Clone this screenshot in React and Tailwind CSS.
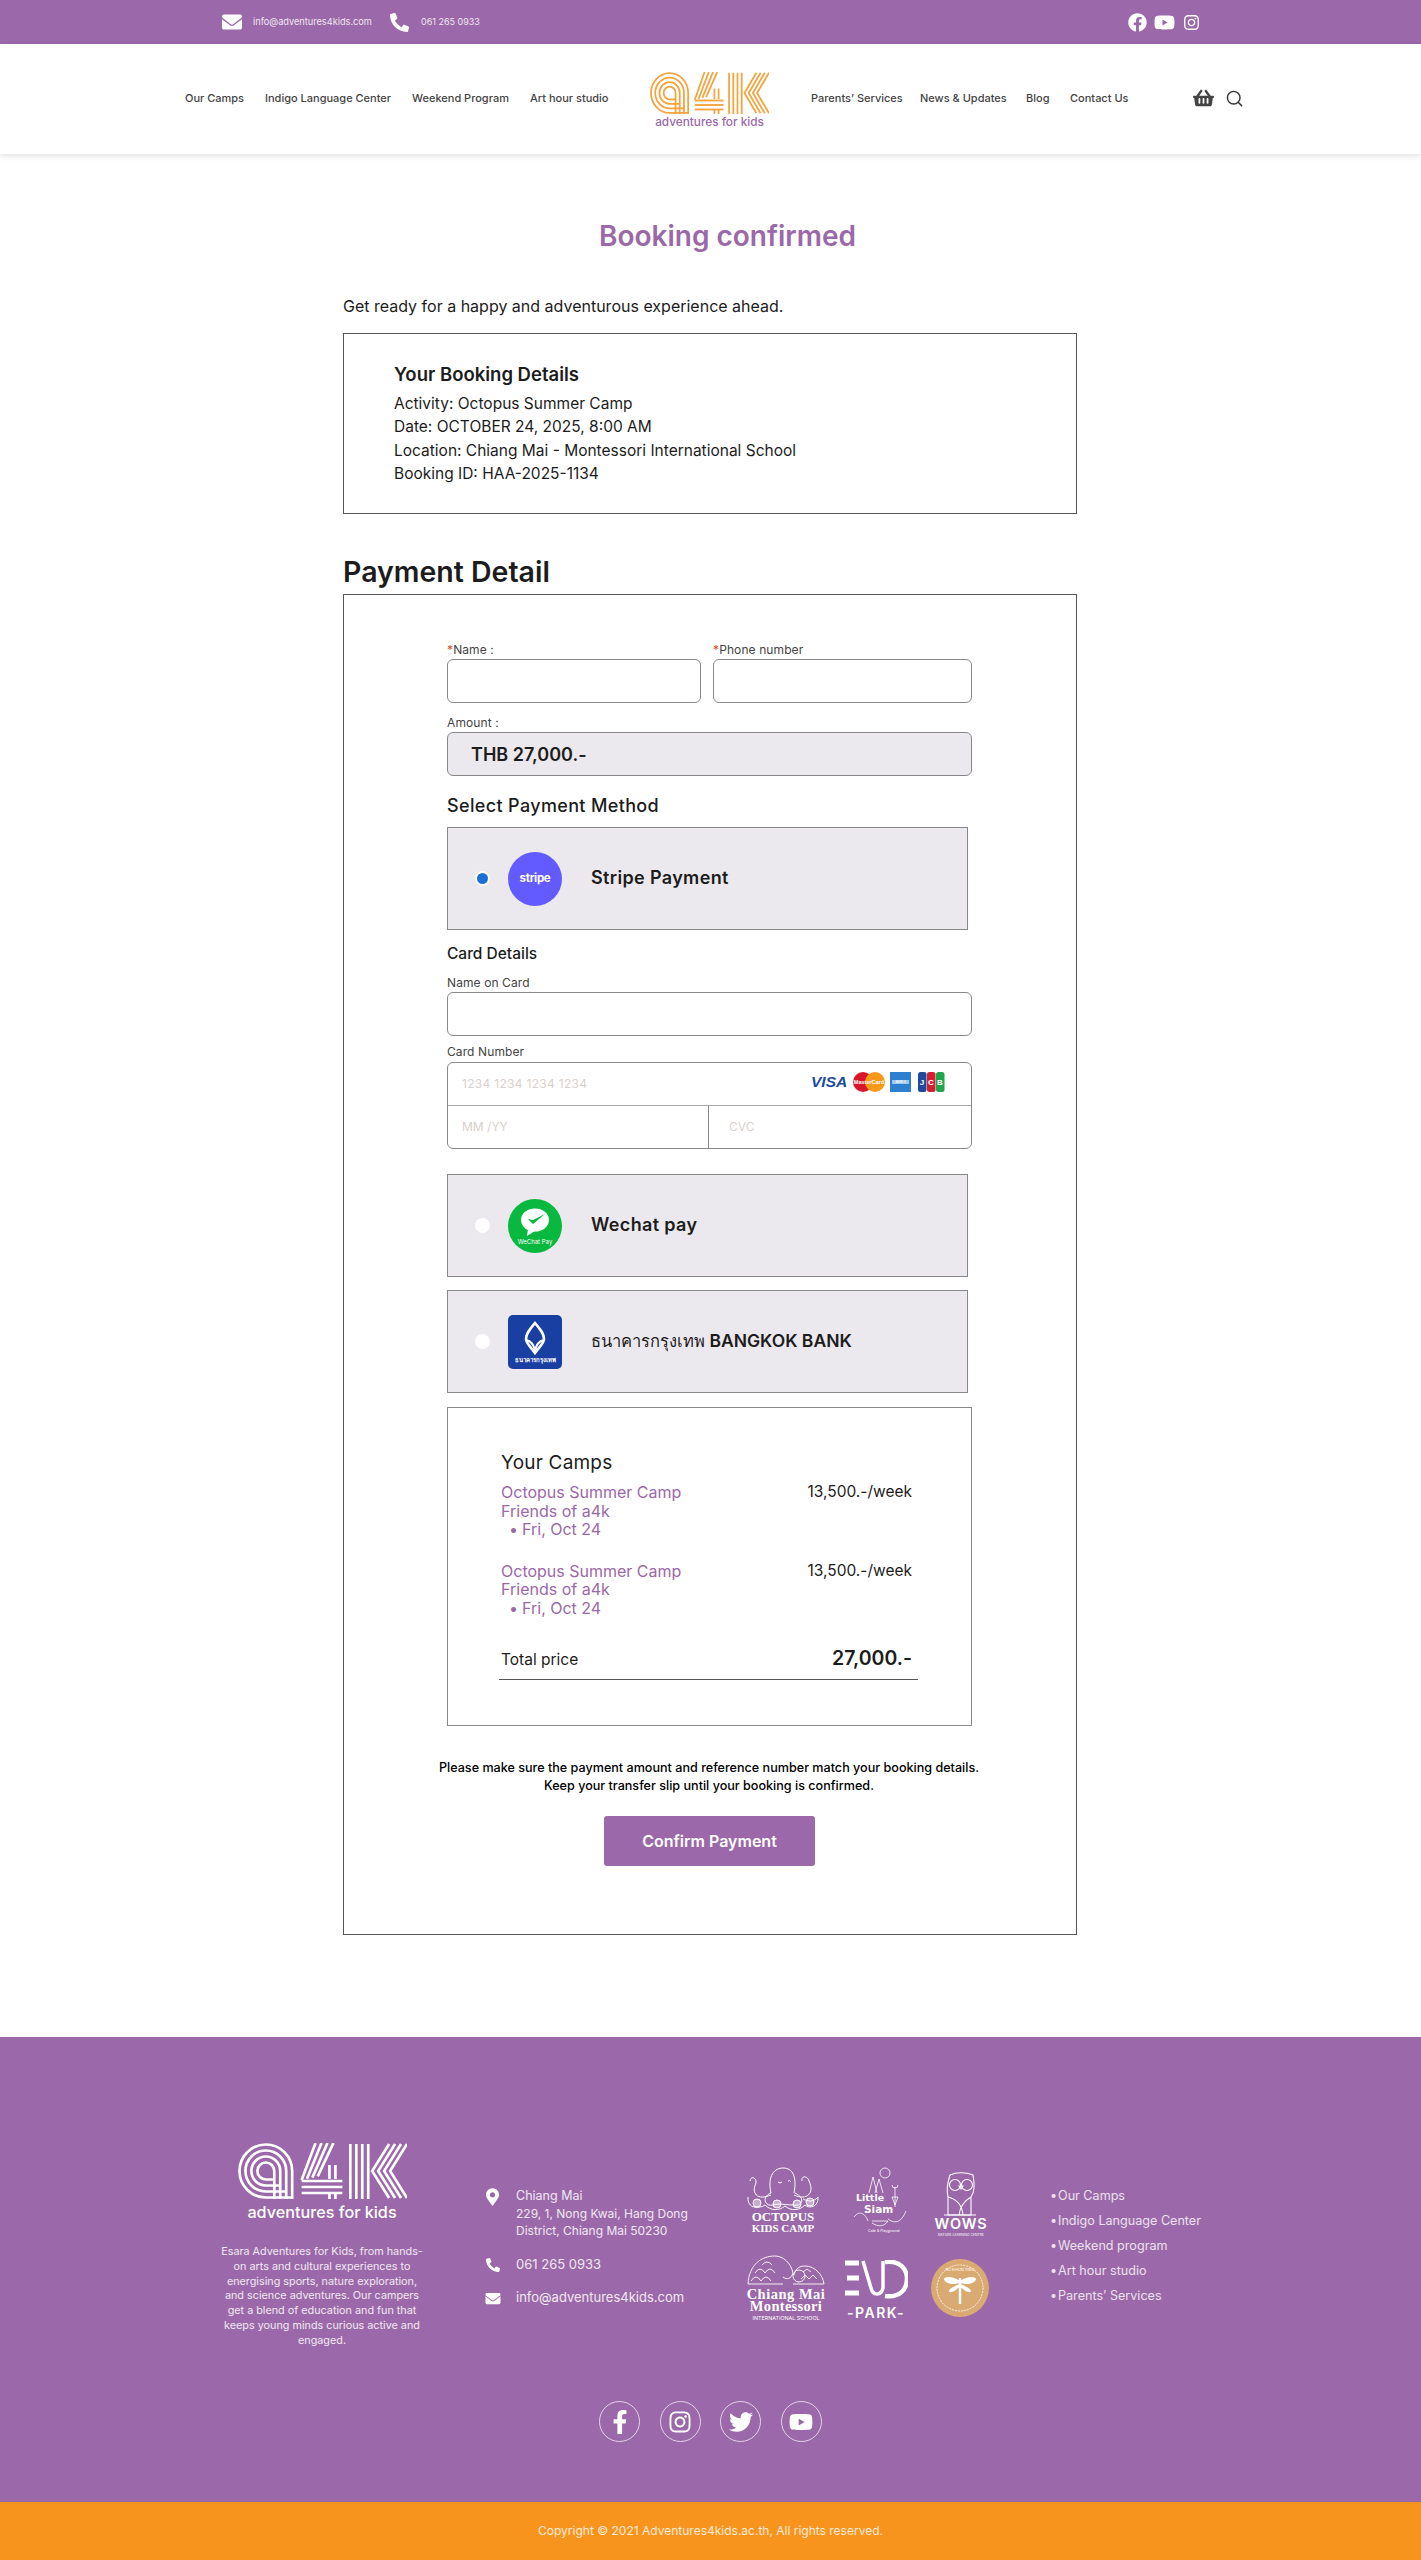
import React from "react";
import { FaEnvelope, FaPhoneAlt, FaFacebook, FaYoutube, FaInstagram, FaShoppingBasket, FaMapMarkerAlt, FaFacebookF, FaTwitter } from "react-icons/fa";
import { Search } from "lucide-react";

function A4K({ color, className, sw = 2.7 }) {
  const rs = [26.5, 20.5, 14.5, 8.5];
  return (
    <svg viewBox="0 0 170 56" className={className} fill="none" stroke={color} strokeWidth={sw} preserveAspectRatio="none">
      {rs.map((r) => (
        <path key={r} d={`M${28 + r} 56 V28 A${r} ${r} 0 0 0 ${28 - r} 28 A${r} ${r} 0 0 0 28 ${28 + r} H${28 + r}`} />
      ))}
      {[0, 6, 12, 18].map((d) => (
        <path key={d} d={`M${78 + d} 0 L${64 + d * 0.9} ${37 - d * 0.2}`} />
      ))}
      {[38, 44, 50].map((y) => (
        <path key={y} d={`M64 ${y} H105`} />
      ))}
      <path d="M92 22 V36 M98 22 V36 M92 50 V56 M98 50 V56" />
      {[113, 119, 125, 131].map((x) => (
        <path key={x} d={`M${x} 1 V56`} />
      ))}
      {[0, 6, 12, 18].map((d) => (
        <path key={d} d={`M${152 + d} 1 L${135 + d} 28 L${152 + d} 55`} />
      ))}
    </svg>
  );
}

function Octopus() {
  return (
    <svg width="72" height="66" viewBox="0 0 72 66" fill="none" stroke="white" strokeWidth="1">
      <path d="M24 26 C20 8 28 1 36 1 C46 1 50 10 47 26" />
      <path d="M31 15 q2 2 4 0 M41 14 q2 -1 3 1" />
      <path d="M24 26 C14 30 18 40 26 38 C32 36 40 38 46 38 C54 40 60 32 48 26" />
      <path d="M24 28 C10 34 4 26 9 16 C10 11 4 8 3 14 M47 28 C60 34 68 26 62 14 C61 9 54 8 55 14" />
      <path d="M1 30 C0 42 12 42 18 38 C24 44 32 44 38 39 C44 44 52 44 58 38 C62 42 72 40 71 30 C66 36 60 34 56 32" />
      <circle cx="10" cy="36" r="4" fill="white" fillOpacity=".45" />
      <circle cx="30" cy="37" r="4" fill="white" fillOpacity=".45" />
      <circle cx="50" cy="37" r="4" fill="white" fillOpacity=".45" />
      <circle cx="63" cy="35" r="4" fill="white" fillOpacity=".45" />
      <text x="36" y="54" textAnchor="middle" fill="white" stroke="none" fontFamily="Liberation Serif" fontWeight="700" fontSize="13">OCTOPUS</text>
      <text x="36" y="65" textAnchor="middle" fill="white" stroke="none" fontFamily="Liberation Serif" fontWeight="700" fontSize="11">KIDS CAMP</text>
    </svg>
  );
}

function Siam() {
  return (
    <svg width="56" height="66" viewBox="0 0 56 66" fill="none" stroke="white" strokeWidth=".8">
      <circle cx="33" cy="6" r="5" />
      <path d="M17 26 L21 10 L25 26 M23 26 L27 12 L31 26" />
      <path d="M43 20 v20 M40 30 h6 l-3 8 z M40 18 a3 3 0 1 0 6 0" />
      <path d="M2 50 c6 -8 12 -2 14 4 M36 52 c8 6 14 2 18 -8 M20 56 c6 4 12 4 16 -2 h-16" />
      <text x="4" y="34" fill="white" stroke="none" fontFamily="DejaVu Sans" fontWeight="700" fontSize="9.5">Little</text>
      <text x="12" y="46" fill="white" stroke="none" fontFamily="DejaVu Sans" fontWeight="700" fontSize="10.5">Siam</text>
      <text x="16" y="65" fill="white" stroke="none" fontFamily="Inter" fontSize="3.6">Cafe &amp; Playground</text>
    </svg>
  );
}

function Wows() {
  return (
    <svg width="54" height="70" viewBox="0 0 54 70" fill="none" stroke="white" strokeWidth="1.1">
      <path d="M16 8 C22 5 32 5 39 8 C41 18 40 26 37 30 V48 H14 V30 C12 22 14 14 16 8 Z" />
      <circle cx="21" cy="18" r="5.5" />
      <circle cx="33" cy="18" r="5.5" />
      <path d="M27 22 l-2 -3 h4 z M14 30 C22 32 28 38 29 48 M37 30 C30 34 26 40 25 48 M10 48 H42" />
      <text x="27" y="62" textAnchor="middle" fill="white" stroke="none" fontFamily="Inter" fontWeight="600" fontSize="14.5" letterSpacing=".8">WOWS</text>
      <text x="27" y="69" textAnchor="middle" fill="white" stroke="none" fontFamily="Inter" fontSize="3.4">NATURE LEARNING CENTRE</text>
    </svg>
  );
}

function Montessori() {
  return (
    <svg width="78" height="67" viewBox="0 0 78 67" fill="none" stroke="white" strokeWidth=".9">
      <path d="M1 29 C2 10 14 1 28 1 C36 1 44 8 46 18 C44 24 40 25 36 22 M46 29 H77 C76 20 68 11 58 11 C50 11 48 16 47 20" />
      <path d="M1 29 H36" />
      <path d="M4 26 q5 -8 10 0 q5 -8 10 0 M8 18 q5 -8 10 0 q5 -8 10 0 M15 10 q5 -6 10 0 M54 24 l4 -4 4 4 4 -4 4 4 M56 17 l4 -3 4 3" />
      <circle cx="52" cy="21" r="6" />
      <text x="39" y="44" textAnchor="middle" fill="white" stroke="none" fontFamily="Liberation Serif" fontWeight="700" fontSize="14.5" letterSpacing=".5">Chiang Mai</text>
      <text x="39" y="56" textAnchor="middle" fill="white" stroke="none" fontFamily="Liberation Serif" fontWeight="700" fontSize="14.5" letterSpacing=".3">Montessori</text>
      <text x="39" y="65" textAnchor="middle" fill="white" stroke="none" fontFamily="Inter" fontSize="5.4">INTERNATIONAL SCHOOL</text>
    </svg>
  );
}

function Evo() {
  return (
    <svg width="63" height="60" viewBox="0 0 63 60" fill="none" stroke="white">
      <path d="M0 3 H14 M2 18 H14 M0 33 H14" strokeWidth="5" />
      <path d="M18 1 L26 28 C28 36 36 36 38 28 L38 1" strokeWidth="3.5" />
      <path d="M40 2 C56 0 62 10 62 19 C62 30 54 38 40 36" strokeWidth="4.5" />
      <text x="31" y="58" textAnchor="middle" fill="white" stroke="none" fontFamily="Inter" fontWeight="600" fontSize="14" letterSpacing="1.5">-PARK-</text>
    </svg>
  );
}

function Dragonfly() {
  return (
    <svg width="58" height="58" viewBox="0 0 58 58" fill="none">
      <circle cx="29" cy="29" r="29" fill="#d9ab72" />
      <circle cx="29" cy="29" r="23" fill="none" stroke="white" strokeWidth=".8" strokeDasharray="2 1" />
      <path d="M29 19 V45" stroke="white" strokeWidth="2.4" />
      <path d="M29 22 C22 17 14 17 13 20 C14 25 23 26 29 24 Z M29 22 C36 17 44 17 45 20 C44 25 35 26 29 24 Z M29 25 C24 27 17 30 18 33 C22 34 27 30 29 27 Z M29 25 C34 27 41 30 40 33 C36 34 31 30 29 27 Z" fill="white" />
      <text x="29" y="12" textAnchor="middle" fill="white" fontFamily="Inter" fontSize="4">RU KHUN YING</text>
    </svg>
  );
}

function Cards() {
  return (
    <div className="flex items-center h-[20px]">
      <span className="w-[37px] font-['Liberation_Sans'] font-bold italic text-[15.5px] leading-[20px] text-[#1a4a9c] whitespace-nowrap">VISA</span>
      <svg width="32" height="20" viewBox="0 0 32 20" className="ml-[5px]">
        <circle cx="10" cy="10" r="10" fill="#d8182a" />
        <circle cx="22" cy="10" r="10" fill="#f79a1c" />
        <text x="16" y="12" textAnchor="middle" fill="#fff" fontFamily="Liberation Sans" fontWeight="700" fontSize="5.5">MasterCard</text>
      </svg>
      <svg width="21" height="20" viewBox="0 0 21 20" className="ml-[5px]">
        <rect width="21" height="20" fill="#2f7fd0" />
        <rect x="2" y="8" width="17" height="4" fill="#9cc9f0" />
        <text x="10.5" y="11.3" textAnchor="middle" fill="#fff" fontFamily="Liberation Sans" fontSize="3.6">AMEX</text>
      </svg>
      <svg width="27" height="20" viewBox="0 0 27 20" className="ml-[7px]">
        <rect x="0" width="8.5" height="20" rx="2.5" fill="#1d4a9c" />
        <rect x="9" width="8.5" height="20" rx="2.5" fill="#d3202f" />
        <rect x="18" width="8.5" height="20" rx="2.5" fill="#1fa54a" />
        <text x="4" y="13" textAnchor="middle" fill="#fff" fontFamily="Liberation Sans" fontWeight="700" fontSize="8">J</text>
        <text x="13" y="13" textAnchor="middle" fill="#fff" fontFamily="Liberation Sans" fontWeight="700" fontSize="8">C</text>
        <text x="22" y="13" textAnchor="middle" fill="#fff" fontFamily="Liberation Sans" fontWeight="700" fontSize="8">B</text>
      </svg>
    </div>
  );
}

function PayBox({ selected, logo, children }) {
  return (
    <div className="w-[521px] h-[103px] bg-[#ece9ee] border border-[#888888] flex items-center pl-[27px]">
      <span className="w-[15px] h-[15px] rounded-full bg-white flex items-center justify-center">
        {selected && <span className="w-[11px] h-[11px] rounded-full bg-[#1b6fd6]" />}
      </span>
      <div className="ml-[18px] w-[54px] h-[54px]">{logo}</div>
      <div className="ml-[29px] text-[#1c1c1c] text-[18px] -mt-[2px] whitespace-nowrap">{children}</div>
    </div>
  );
}

const label = "text-[12px] leading-[16px] text-[#444444] whitespace-nowrap tracking-[0.1px]";
const star = <span className="text-[#e04a1a]">*</span>;
const inputCls = "h-[44px] bg-white border border-[#888888] rounded-[6px]";

const left = [["Our Camps", "w-[59px]"], ["Indigo Language Center", "w-[126px]"], ["Weekend Program", "w-[97px]"], ["Art hour studio", "w-[77px]"]];
const right = [["Parents’ Services", "w-[88px]"], ["News & Updates", "w-[85px]"], ["Blog", "w-[23px]"], ["Contact Us", "w-[58px]"]];

function CampRow() {
  return (
    <div className="flex justify-between w-[411px]">
      <div className="text-[16px] leading-[18.5px] text-[#9b68a9]">
        <div>Octopus Summer Camp</div>
        <div>Friends of a4k</div>
        <div className="flex">
          <span className="w-[21px] pl-[8px]">•</span>
          <span>Fri, Oct 24</span>
        </div>
      </div>
      <div className="text-[15.5px] leading-[18.5px] text-[#1c1c1c] whitespace-nowrap">13,500.-/week</div>
    </div>
  );
}

export default function App() {
  return (
    <div className="w-[1421px] h-[2560px] bg-white overflow-hidden font-['Inter',sans-serif] text-[#1c1c1c]">
      <div className="h-[44px] bg-[#9b68a9] flex items-center justify-between pl-[222px] pr-[221px] text-white">
        <div className="flex items-center">
          <FaEnvelope className="w-[20px] h-[20px]" />
          <span className="ml-[11px] w-[121px] text-[9.2px] whitespace-nowrap opacity-85">info@adventures4kids.com</span>
          <FaPhoneAlt className="ml-[16px] w-[19px] h-[19px]" />
          <span className="ml-[12px] text-[9px] whitespace-nowrap opacity-85">061 265 0933</span>
        </div>
        <div className="flex items-center">
          <FaFacebook className="w-[19px] h-[19px]" />
          <FaYoutube className="ml-[7px] w-[21px] h-[21px]" />
          <FaInstagram className="ml-[8px] w-[17px] h-[17px]" />
        </div>
      </div>

      <div className="h-[110px] bg-white shadow-[0_2px_6px_rgba(0,0,0,0.12)] flex items-start pl-[185px] relative">
        <div className="flex gap-[21px] mt-[46px] text-[#444444] text-[11px] font-medium leading-[16px] whitespace-nowrap">
          {left.map(([t, w]) => <span key={t} className={w}>{t}</span>)}
        </div>
        <div className="ml-[43px] mt-[28px] w-[119px] flex flex-col items-center">
          <A4K color="#f5a33c" className="w-[119px] h-[42px]" sw={2.5} />
          <div className="mt-[1px] text-[11.8px] leading-[15px] text-[#9b68a9] font-medium whitespace-nowrap">adventures for kids</div>
        </div>
        <div className="ml-[42px] flex gap-[21px] mt-[46px] text-[#444444] text-[11px] font-medium leading-[16px] whitespace-nowrap">
          {right.map(([t, w]) => <span key={t} className={w}>{t}</span>)}
        </div>
        <FaShoppingBasket className="ml-[65px] mt-[44px] w-[21px] h-[20px] text-[#444444]" />
        <Search className="ml-[11px] mt-[45px] w-[19px] h-[19px] text-[#333333]" strokeWidth={1.8} />
      </div>

      <div className="pt-[65px] pl-[343px]">
        <div className="w-[769px] text-center text-[28px] leading-[34px] font-semibold text-[#9b68a9]">Booking confirmed</div>
        <div className="mt-[41px] text-[16px] leading-[24px]">Get ready for a happy and adventurous experience ahead.</div>
        <div className="mt-[15px] w-[734px] h-[181px] border border-[#555555] pl-[50px] pt-[26px]">
          <div className="text-[18.5px] leading-[28px] font-semibold">Your Booking Details</div>
          <div className="mt-[4px] text-[15.5px] leading-[23.4px]">
            <div>Activity: Octopus Summer Camp</div>
            <div>Date: OCTOBER 24, 2025, 8:00 AM</div>
            <div>Location: Chiang Mai - Montessori International School</div>
            <div>Booking ID: HAA-2025-1134</div>
          </div>
        </div>
        <div className="mt-[40px] text-[28.5px] leading-[36px] font-semibold">Payment Detail</div>
        <div className="mt-[4px] w-[734px] border border-[#555555] pl-[103px] pt-[47px] pb-[68px]">
          <div className="w-[525px]">
            <div className="flex gap-[12px]">
              <div className="w-[254px]">
                <div className={label}>{star}Name :</div>
                <div className={`mt-[1px] ${inputCls}`} />
              </div>
              <div className="w-[259px]">
                <div className={label}>{star}Phone number</div>
                <div className={`mt-[1px] ${inputCls}`} />
              </div>
            </div>
            <div className={`mt-[12px] ${label}`}>Amount :</div>
            <div className={`mt-[1px] ${inputCls} !bg-[#ece9ee] flex items-center pl-[23px] text-[18px] font-semibold`}>THB 27,000.-</div>
            <div className="mt-[18px] text-[18px] leading-[24px] font-medium tracking-[0.35px]">Select Payment Method</div>
            <div className="mt-[9px]">
              <PayBox selected logo={
                <div className="w-[54px] h-[54px] rounded-full bg-[#635bff] flex items-center justify-center text-white font-bold text-[11.5px] tracking-[-0.3px]">stripe</div>
              }><span className="font-semibold tracking-[0.35px]">Stripe Payment</span></PayBox>
            </div>
            <div className="mt-[14px] text-[15.5px] leading-[20px] font-medium">Card Details</div>
            <div className={`mt-[11px] ${label}`}>Name on Card</div>
            <div className={`mt-[1px] ${inputCls}`} />
            <div className={`mt-[8px] ${label}`}>Card Number</div>
            <div className="mt-[2px] h-[87px] border border-[#888888] rounded-[6px] flex flex-col">
              <div className="h-[43px] border-b border-[#a8a8a8] flex items-center justify-between pl-[14px] pr-[26px] text-[12px] text-[#d8d0cc]">
                <span className="tracking-[0.3px]">1234 1234 1234 1234</span>
                <div className="-mt-[4px]"><Cards /></div>
              </div>
              <div className="flex-1 flex text-[12px] text-[#d8d0cc]">
                <div className="w-[261px] border-r border-[#888888] pl-[14px] flex items-center">MM /YY</div>
                <div className="pl-[20px] flex items-center">CVC</div>
              </div>
            </div>
            <div className="mt-[25px]">
              <PayBox logo={
                <svg width="54" height="54" viewBox="0 0 54 54">
                  <circle cx="27" cy="27" r="27" fill="#09b83e" />
                  <ellipse cx="27" cy="21" rx="14" ry="11.5" fill="#fff" />
                  <path d="M20 30 L19 37 L27 32 Z" fill="#fff" />
                  <path d="M20 20 L25 25 L37 15 L25 21 Z" fill="#09b83e" />
                  <text x="27" y="45" textAnchor="middle" fill="#fff" fontFamily="Inter" fontSize="6">WeChat Pay</text>
                </svg>
              }><span className="font-semibold tracking-[0.35px]">Wechat pay</span></PayBox>
            </div>
            <div className="mt-[13px]">
              <PayBox logo={
                <div className="w-[54px] h-[54px] rounded-[5px] bg-[#1a3fa3] flex flex-col items-center pt-[6px] text-white">
                  <svg width="24" height="34" viewBox="0 0 24 34" fill="none" stroke="white" strokeWidth="2.6">
                    <path d="M12 2 C18 9 21 13 21 18 C21 22 17 25 12 32 C7 25 3 22 3 18 C3 13 6 9 12 2 Z" />
                    <path d="M3 19 C8 20 11 24 12 30 C13 24 16 20 21 19" strokeWidth="2" />
                  </svg>
                  <div className="text-[6px] leading-[8px] font-bold whitespace-nowrap mt-[1px]">ธนาคารกรุงเทพ</div>
                </div>
              }>
                <span className="font-medium text-[16.5px]">ธนาคารกรุงเทพ </span>
                <span className="font-semibold text-[17.5px]">BANGKOK BANK</span>
              </PayBox>
            </div>
            <div className="mt-[14px] h-[319px] border border-[#888888] pl-[53px] pt-[42px]">
              <div className="text-[19px] leading-[26px] font-normal tracking-[0.2px]">Your Camps</div>
              <div className="mt-[7px]"><CampRow /></div>
              <div className="mt-[23px]"><CampRow /></div>
              <div className="mt-[30px] -ml-[2px] w-[419px] border-b border-[#555555] pl-[2px] pr-[6px] pb-[6px] flex justify-between items-center">
                <span className="text-[15.5px] leading-[26px]">Total price</span>
                <span className="text-[19.5px] leading-[26px] font-semibold -mt-[5px]">27,000.-</span>
              </div>
            </div>
            <div className="mt-[33px] -ml-[20px] w-[564px] text-center text-[12.6px] leading-[18px] font-medium text-black whitespace-nowrap">
              <div>Please make sure the payment amount and reference number match your booking details.</div>
              <div>Keep your transfer slip until your booking is confirmed.</div>
            </div>
            <div className="mt-[21px] ml-[157px] w-[211px] h-[50px] rounded-[3px] bg-[#9b68a9] text-white text-[16px] font-semibold flex items-center justify-center">Confirm Payment</div>
          </div>
        </div>
      </div>

      <div className="mt-[102px] h-[465px] bg-[#9b68a9] text-white">
        <div className="h-[364px] flex pl-[222px]">
          <div className="w-[200px] pt-[106px] flex flex-col items-center">
            <A4K color="white" className="w-[169px] h-[56px]" sw={2.7} />
            <div className="mt-[2px] text-[16.2px] leading-[22px] font-medium whitespace-nowrap">adventures for kids</div>
            <div className="mt-[22px] text-center text-[10.8px] leading-[14.8px] text-white/85 whitespace-nowrap">
              Esara Adventures for Kids, from hands-<br />on arts and cultural experiences to<br />energising sports, nature exploration,<br />and science adventures. Our campers<br />get a blend of education and fun that<br />keeps young minds curious active and<br />engaged.
            </div>
          </div>
          <div className="ml-[64px] w-[261px] pt-[150px] text-[12.5px] leading-[17.6px] text-white/85 whitespace-nowrap">
            <div className="flex">
              <FaMapMarkerAlt className="w-[13px] h-[18px] text-white mt-[1px]" />
              <div className="ml-[17px]">Chiang Mai<br /><span className="text-[12px]">229, 1, Nong Kwai, Hang Dong</span><br /><span className="text-[12px]">District, Chiang Mai 50230</span></div>
            </div>
            <div className="flex mt-[16px] items-center">
              <FaPhoneAlt className="w-[14px] h-[14px] text-white" />
              <div className="ml-[16px] text-[13px]">061 265 0933</div>
            </div>
            <div className="flex mt-[16px] items-center">
              <FaEnvelope className="w-[16px] h-[15px] text-white -ml-[1px]" />
              <div className="ml-[15px] text-[13px]">info@adventures4kids.com</div>
            </div>
          </div>
          <div className="pt-[130px] w-[303px]">
            <div className="flex">
              <Octopus />
              <div className="ml-[33px]"><Siam /></div>
              <div className="ml-[26px]"><Wows /></div>
            </div>
            <div className="flex mt-[18px] items-start">
              <Montessori />
              <div className="ml-[20px] mt-[5px]"><Evo /></div>
              <div className="ml-[23px] mt-[4px]"><Dragonfly /></div>
            </div>
          </div>
          <div className="pt-[146px] text-[12.6px] leading-[25px] text-white/80 whitespace-nowrap">
            {["Our Camps", "Indigo Language Center", "Weekend program", "Art hour studio", "Parents’ Services"].map((t) => (
              <div key={t} className="flex"><span className="w-[8px]">•</span>{t}</div>
            ))}
          </div>
        </div>
        <div className="flex justify-center gap-[19.5px]">
          {[FaFacebookF, FaInstagram, FaTwitter, FaYoutube].map((I, i) => (
            <div key={i} className="w-[41px] h-[41px] rounded-full border border-white/70 flex items-center justify-center">
              <I className="w-[24px] h-[24px] text-white" />
            </div>
          ))}
        </div>
      </div>

      <div className="h-[58px] bg-[#f7941d] flex items-center justify-center text-white/80 text-[12px]">Copyright © 2021 Adventures4kids.ac.th, All rights reserved.</div>
    </div>
  );
}
